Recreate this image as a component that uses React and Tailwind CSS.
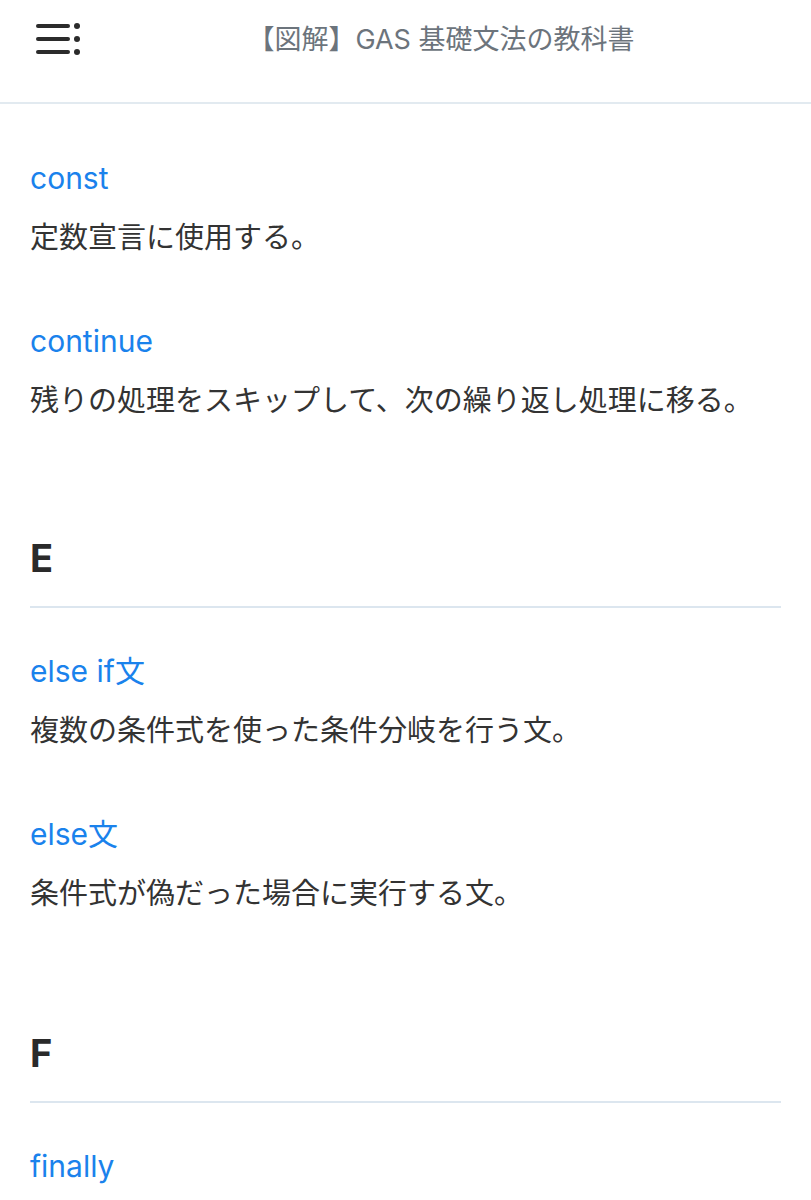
import React from "react";

const font = { fontFamily: '"Inter", "Noto Sans CJK JP", sans-serif' };

function Item({ term, desc, first }) {
  return (
    <div className={first ? "" : "mt-[63px]"}>
      <div className="text-[30px] leading-[40px] text-[#1a82ec]">{term}</div>
      {desc ? (
        <div className="mt-[20px] text-[29px] leading-[40px] text-[#333333]">{desc}</div>
      ) : null}
    </div>
  );
}

function Section({ letter, children, top }) {
  return (
    <div className={top}>
      <div className="text-[38px] leading-[48px] font-bold text-[#2a2a2a]">{letter}</div>
      <div className="mt-[24px] h-[2px] bg-[#dce6ef]" />
      <div className="mt-[43px]">{children}</div>
    </div>
  );
}

export default function App() {
  return (
    <div className="w-[811px] h-[1200px] overflow-hidden bg-white" style={font}>
      <header className="h-[104px] border-b-2 border-[#e2eaf0] flex items-start">
        <div className="pl-[35px] pt-[23px]">
          <svg width="48" height="34" viewBox="0 0 48 34">
            <g stroke="#2b2b2b" strokeWidth="4" strokeLinecap="round">
              <line x1="3" y1="3" x2="33" y2="3" />
              <line x1="3" y1="16" x2="33" y2="16" />
              <line x1="3" y1="29" x2="33" y2="29" />
            </g>
            <g fill="#2b2b2b">
              <circle cx="42" cy="3" r="3" />
              <circle cx="42" cy="16" r="3" />
              <circle cx="42" cy="29" r="3" />
            </g>
          </svg>
        </div>
        <div className="flex-1 pt-[20px] pr-[12px] text-center text-[27px] leading-[40px] text-[#6c747c]">
          【図解】GAS 基礎文法の教科書
        </div>
      </header>
      <main className="px-[30px] pt-[54px]">
        <Item first term="const" desc="定数宣言に使用する。" />
        <Item term="continue" desc="残りの処理をスキップして、次の繰り返し処理に移る。" />
        <Section letter="E" top="mt-[113px]">
          <Item first term="else if文" desc="複数の条件式を使った条件分岐を行う文。" />
          <Item term="else文" desc="条件式が偽だった場合に実行する文。" />
        </Section>
        <Section letter="F" top="mt-[115px]">
          <Item first term="finally" desc="" />
        </Section>
      </main>
    </div>
  );
}
